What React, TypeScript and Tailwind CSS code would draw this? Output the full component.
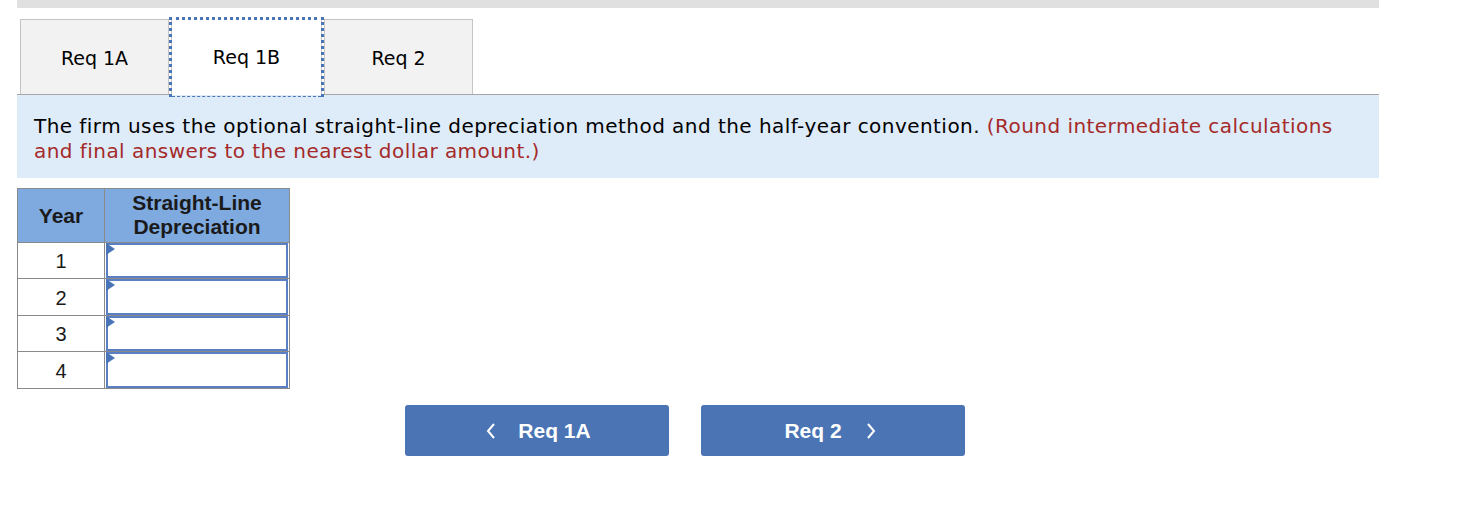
import React from "react";

const verdana = { fontFamily: '"DejaVu Sans", Verdana, sans-serif' };
const arial = { fontFamily: '"Liberation Sans", Arial, sans-serif' };

function Tab({ label }: { label: string }) {
  return (
    <div className="w-[149px] h-[75px] border border-b-0 border-[#c4c4c4] bg-[#f2f2f2] flex items-center justify-center text-[19px] text-black pt-[2px]">
      {label}
    </div>
  );
}

function ActiveTab({ label }: { label: string }) {
  return (
    <div className="relative w-[155px] h-[76px] z-10">
      <div className="h-[76px] mx-[2px] border-x border-[#c4c4c4] bg-white flex items-center justify-center text-[19px] text-black pt-[1px]">
        {label}
      </div>
      <div className="absolute -top-[2px] left-0 right-0 bottom-[-2px] border-t-[3px] border-x-[3px] border-dotted border-[#4a74b8]" />
      <div className="absolute left-[3px] right-[3px] bottom-[-2px] border-b border-dashed border-[#4a74b8]" />
    </div>
  );
}

function InputCell({ h }: { h: number }) {
  return (
    <td className="border border-[#8a8a8a] p-0">
      <div
        className="relative mx-[1px] border-2 border-[#5a7fc2] bg-white"
        style={{ height: h - 1 }}
      >
        <div className="absolute -left-[2px] -top-[2px] w-0 h-0 border-y-[6px] border-y-transparent border-l-[9px] border-l-[#4a74b8]" />
      </div>
    </td>
  );
}

const rows = [
  { n: 1, h: 36 },
  { n: 2, h: 37 },
  { n: 3, h: 36 },
  { n: 4, h: 37 },
];

export default function App() {
  return (
    <div className="w-[1482px] h-[506px] bg-white" style={verdana}>
      <div className="ml-[17px] w-[1362px]">
        <div className="h-[8px] bg-[#e0e0e0]" />
        <div className="flex items-start h-[76px] mt-[11px] pl-[3px] border-b border-[#a6a6a6]">
          <Tab label="Req 1A" />
          <ActiveTab label="Req 1B" />
          <Tab label="Req 2" />
        </div>
        <div className="bg-[#deebf8] px-[17px] pt-[19px] pb-[14px] text-[20px] leading-[25px] tracking-[0.45px] text-black">
          The firm uses the optional straight-line depreciation method and the half-year convention.{" "}
          <span className="text-[#a52a2a]">(Round intermediate calculations and final answers to the nearest dollar amount.)</span>
        </div>
        <table className="mt-[10px] border-collapse text-[20px] text-[#1a1a1a]" style={arial}>
          <thead>
            <tr className="bg-[#7eaae0]">
              <th className="border border-[#8a8a8a] w-[87px] h-[54px] font-bold text-[21px] leading-[24px]">Year</th>
              <th className="border border-[#8a8a8a] w-[185px] h-[54px] font-bold text-[21px] leading-[24px] pb-[2px]">
                Straight-Line
                <br />
                Depreciation
              </th>
            </tr>
          </thead>
          <tbody>
            {rows.map((r) => (
              <tr key={r.n} style={{ height: r.h }}>
                <td className="border border-[#8a8a8a] text-center p-0 pt-[1px]">{r.n}</td>
                <InputCell h={r.h} />
              </tr>
            ))}
          </tbody>
        </table>
        <div className="flex gap-[32px] ml-[388px] mt-[16px]" style={arial}>
          <button className="w-[264px] h-[51px] rounded-[3px] bg-[#4a74b4] text-white font-bold text-[21px] flex items-center justify-center pl-[2px]">
            <svg width="12" height="18" viewBox="0 0 12 18" className="mr-[21px]">
              <path d="M9 2 L3 9 L9 16" fill="none" stroke="white" strokeWidth="2" />
            </svg>
            Req 1A
          </button>
          <button className="w-[264px] h-[51px] rounded-[3px] bg-[#4a74b4] text-white font-bold text-[21px] flex items-center justify-center pr-[5px]">
            Req 2
            <svg width="12" height="18" viewBox="0 0 12 18" className="ml-[23px]">
              <path d="M3 2 L9 9 L3 16" fill="none" stroke="white" strokeWidth="2" />
            </svg>
          </button>
        </div>
      </div>
    </div>
  );
}
